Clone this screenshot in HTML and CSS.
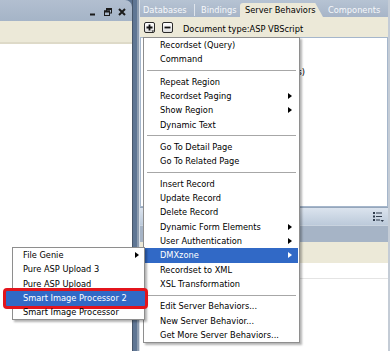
FILE: index.html
```html
<!DOCTYPE html>
<html lang="en">
<head>
  <meta charset="UTF-8">
  <title>Server Behaviors - DMXzone menu</title>
  <link rel="stylesheet" href="styles.css">
</head>
<body>
  <div class="app">
    <div class="left-panel">
      <div class="title-bar">
        <svg class="win-btn" width="8" height="8" viewBox="0 0 8 8"><rect x="0" y="5.5" width="5" height="2" fill="#1b1b1b"/></svg>
        <svg class="win-btn" width="8" height="8" viewBox="0 0 8 8">
          <rect x="2.5" y="0.5" width="5" height="4.5" fill="none" stroke="#1b1b1b"/>
          <rect x="2" y="0" width="6" height="2" fill="#1b1b1b"/>
          <rect x="0.5" y="3" width="5" height="4.5" fill="#a9b7c9" stroke="#1b1b1b"/>
          <rect x="0" y="2.5" width="6" height="2" fill="#1b1b1b"/>
        </svg>
        <svg class="win-btn" width="8" height="8" viewBox="0 0 8 8"><path d="M1 1 L7 7 M7 1 L1 7" stroke="#1b1b1b" stroke-width="2"/></svg>
      </div>
      <div class="left-strip"></div>
      <div class="left-canvas"></div>
    </div>

    <div class="splitter"></div>

    <div class="right-panel">
      <div class="tabs">
        <div class="tab tab-db">Databases</div>
        <div class="tab tab-bind">Bindings</div>
        <div class="tab active">Server Behaviors</div>
        <div class="tab tab-comp">Components</div>
      </div>
      <div class="toolbar">
        <span class="tool-btn">
          <svg width="9" height="9" viewBox="0 0 9 9">
            <path d="M4.5 1.5 V7.5 M1.5 4.5 H7.5" stroke="#111" stroke-width="1.8"/>
            <path d="M6.5 7.5 H9 L7.75 9 Z" fill="#111"/>
          </svg>
        </span>
        <span class="tool-btn">
          <svg width="9" height="9" viewBox="0 0 9 9"><path d="M1.5 4.5 H7.5" stroke="#111" stroke-width="1.8"/></svg>
        </span>
        <span class="doc-type">Document type:ASP VBScript</span>
      </div>
      <div class="behaviors">
        <div class="tree-row">Recordset (rsImages)</div>
      </div>
      <div class="panel-head">
        <svg width="11" height="10" viewBox="0 0 11 10">
          <rect x="0" y="0" width="2" height="2" fill="#2f3b4c"/>
          <rect x="3" y="0.5" width="6" height="1" fill="#2f3b4c"/>
          <rect x="0" y="3.5" width="2" height="2" fill="#2f3b4c"/>
          <rect x="3" y="4" width="6" height="1" fill="#2f3b4c"/>
          <rect x="0" y="7" width="2" height="2" fill="#2f3b4c"/>
          <rect x="3" y="7.5" width="4" height="1" fill="#2f3b4c"/>
          <path d="M7.5 8 H11 L9.25 10 Z" fill="#2f3b4c"/>
        </svg>
      </div>
      <div class="panel-tabs"></div>
      <div class="panel-strip"></div>
      <div class="panel-body">
        <div class="panel-line"></div>
      </div>
    </div>

    <div class="edge"></div>
  </div>

  <div class="menu main-menu">
    <div class="item">Recordset (Query)</div>
    <div class="item">Command</div>
    <div class="sep"></div>
    <div class="item">Repeat Region</div>
    <div class="item has-sub">Recordset Paging</div>
    <div class="item has-sub">Show Region</div>
    <div class="item">Dynamic Text</div>
    <div class="sep"></div>
    <div class="item">Go To Detail Page</div>
    <div class="item">Go To Related Page</div>
    <div class="sep"></div>
    <div class="item">Insert Record</div>
    <div class="item">Update Record</div>
    <div class="item">Delete Record</div>
    <div class="item has-sub">Dynamic Form Elements</div>
    <div class="item has-sub">User Authentication</div>
    <div class="item has-sub hover">DMXzone</div>
    <div class="item">Recordset to XML</div>
    <div class="item">XSL Transformation</div>
    <div class="sep"></div>
    <div class="item">Edit Server Behaviors...</div>
    <div class="item">New Server Behavior...</div>
    <div class="item">Get More Server Behaviors...</div>
  </div>

  <div class="menu sub-menu">
    <div class="item has-sub">File Genie</div>
    <div class="item">Pure ASP Upload 3</div>
    <div class="item">Pure ASP Upload</div>
    <div class="item marked">Smart Image Processor 2</div>
    <div class="item">Smart Image Processor</div>
  </div>
</body>
</html>
```

FILE: styles.css
```css
body {
  margin: 0;
  width: 390px;
  height: 351px;
  overflow: hidden;
  position: relative;
  font-family: "DejaVu Sans", Verdana, sans-serif;
  font-size: 8.25px;
  color: #000;
  background: #fff;
}
.app {
  display: flex;
  height: 351px;
  background: #5d7390;
}
.left-panel {
  width: 132px;
  display: flex;
  flex-direction: column;
}
.title-bar {
  height: 21px;
  background: linear-gradient(#b2bfd0, #a5b4c7);
  border-top-right-radius: 7px;
  display: flex;
  justify-content: flex-end;
  align-items: center;
  gap: 6px;
  padding-right: 6px;
}
.win-btn {
  display: block;
  margin-top: 3px;
}
.left-strip {
  height: 21px;
  background: #ece9d8;
  border-bottom: 2px solid #dedac8;
}
.left-canvas {
  flex: 1;
  background: #fff;
}
.splitter {
  width: 8px;
  background: linear-gradient(to right, #46566b 0 1px, #5f7694 1px 5px, #8e9db0 5px 7px, #d8dfe8 7px 8px);
}
.right-panel {
  flex: 1;
  display: flex;
  flex-direction: column;
  background: #fff;
}
.tabs {
  height: 17px;
  display: flex;
  align-items: flex-end;
  background: linear-gradient(#b6c3d3, #a7b5c8);
}
.tab {
  height: 14px;
  line-height: 14px;
  color: #f6f8fb;
  white-space: nowrap;
  box-sizing: border-box;
}
.tab-db {
  width: 55px;
  padding-left: 3px;
  border-right: 1px solid #dfe5ec;
  height: 12px;
  line-height: 12px;
  margin-bottom: 1px;
}
.tab-bind {
  width: 45px;
  padding-left: 6px;
}
.tab.active {
  width: 83px;
  height: 14.5px;
  padding-left: 5px;
  color: #000;
  background: #ece9d8;
  border-top-left-radius: 3px;
  clip-path: polygon(0 0, calc(100% - 8px) 0, 100% 100%, 0 100%);
}
.tab-comp {
  padding-left: 5px;
}
.toolbar {
  height: 20px;
  display: flex;
  align-items: center;
  padding-left: 4px;
  background: #ece9d8;
}
.tool-btn {
  width: 11px;
  height: 11px;
  box-sizing: border-box;
  border: 1px solid #2a2a2a;
  border-radius: 2px;
  background: linear-gradient(#ffffff, #dedede);
  display: flex;
  align-items: center;
  justify-content: center;
  margin-right: 7px;
}
.doc-type {
  margin-left: 3px;
  margin-top: 3px;
}
.behaviors {
  height: 170px;
  box-sizing: border-box;
  border: 1px solid #a5b6cb;
  background: #fff;
}
.tree-row {
  margin-top: 27px;
  padding-left: 76px;
  line-height: 14px;
}
.panel-head {
  height: 18px;
  box-sizing: border-box;
  border-top: 1px solid #95a6bb;
  background: linear-gradient(#dbe3ee, #bccada);
  display: flex;
  align-items: center;
  justify-content: flex-end;
  padding-right: 4px;
}
.panel-tabs {
  height: 17px;
  box-sizing: border-box;
  border-top: 1px solid #c9d3df;
  background: #a6b4c6;
}
.panel-strip {
  height: 21px;
  background: #ece9d8;
}
.panel-body {
  flex: 1;
  background: #fff;
}
.panel-line {
  height: 15px;
  border-bottom: 1px solid #e4e4e4;
}
.edge {
  width: 2px;
  background: #c4ccd6;
}

/* popup menus */
.menu {
  position: absolute;
  box-sizing: border-box;
  background: #fff;
  border: 1px solid #8e8e8e;
  box-shadow: 2px 2px 2px rgba(0, 0, 0, 0.3);
  white-space: nowrap;
}
.main-menu {
  left: 143px;
  top: 37px;
  width: 157px;
  padding: 0 1px;
  z-index: 5;
}
.sub-menu {
  left: 12px;
  top: 247px;
  width: 133px;
  z-index: 6;
}
.item {
  position: relative;
  height: 14.3px;
  line-height: 14.3px;
  padding-left: 15px;
}
.sub-menu .item {
  padding-left: 10px;
}
.has-sub::after {
  content: "";
  position: absolute;
  right: 6px;
  top: 4px;
  border-left: 4px solid #000;
  border-top: 3.5px solid transparent;
  border-bottom: 3.5px solid transparent;
}
.sub-menu .has-sub::after {
  right: 5px;
}
.item.hover {
  background: #3169c6;
  color: #fff;
}
.item.hover::after {
  border-left-color: #fff;
}
.item.marked {
  color: #fff;
  z-index: 0;
}
.item.marked::before {
  content: "";
  position: absolute;
  left: -10px;
  right: -4px;
  top: -3px;
  bottom: -3.5px;
  border: 3px solid #e3141c;
  border-radius: 4px;
  background: #3169c6;
  z-index: -1;
}
.sep {
  height: 8.15px;
  position: relative;
}
.sep::after {
  content: "";
  position: absolute;
  left: 2px;
  right: 2px;
  top: 3.5px;
  border-top: 1px solid #a7a7a7;
}
```
